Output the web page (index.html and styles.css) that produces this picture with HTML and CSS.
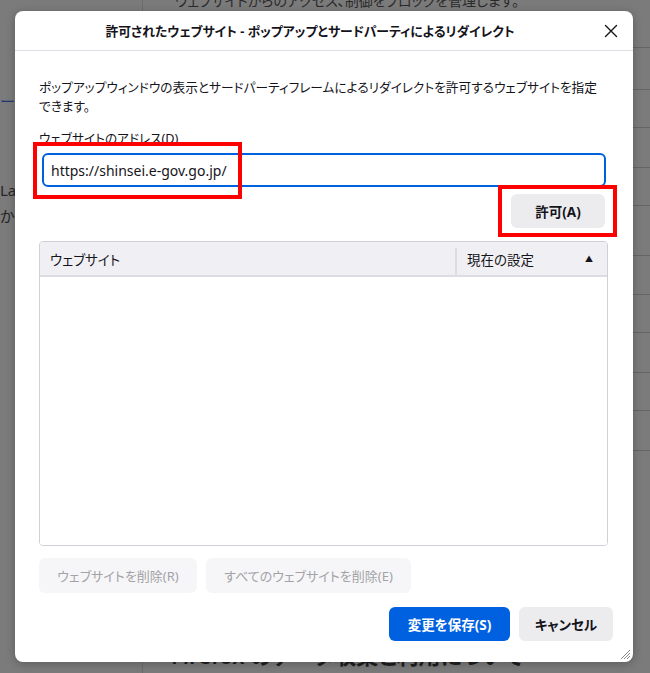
FILE: index.html
```html
<!DOCTYPE html>
<html lang="ja">
<head>
<meta charset="utf-8">
<title>許可されたウェブサイト</title>
<link rel="stylesheet" href="styles.css">
</head>
<body>
<div class="page">
  <aside class="sidebar">
    <div class="side-link">ー</div>
    <div class="side-text side-lab">Lab</div>
    <div class="side-text side-ka">か</div>
  </aside>
  <main class="main">
    <p class="top-text">ウェブサイトからのアクセス、制御をブロックを管理します。</p>
    <div class="rows">
      <div class="row r1"></div>
      <div class="row r2"></div>
      <div class="row r3"></div>
      <div class="row r4"></div>
      <div class="row r5"></div>
      <div class="row r6"></div>
      <div class="row r7"></div>
      <div class="row r8"></div>
      <div class="row r9"></div>
      <div class="row r10"></div>
      <div class="row r11"></div>
    </div>
    <h2 class="bottom-title">Firefox のデータ収集と利用について</h2>
  </main>
</div>

<div class="dialog">
  <header class="dlg-header">
    <h1 class="dlg-title">許可されたウェブサイト - ポップアップとサードパーティによるリダイレクト</h1>
    <button class="close" aria-label="閉じる">
      <svg width="14" height="14" viewBox="0 0 14 14"><path d="M1.5 1.5 L12.5 12.5 M12.5 1.5 L1.5 12.5" stroke="#15141a" stroke-width="1.4" fill="none" stroke-linecap="round"/></svg>
    </button>
  </header>
  <div class="dlg-body">
    <p class="desc">ポップアップウィンドウの表示とサードパーティフレームによるリダイレクトを許可するウェブサイトを指定<br>できます。</p>
    <label class="addr-label">ウェブサイトのアドレス(<u>D</u>)</label>
    <div class="addr-input">https://shinsei.e-gov.go.jp/</div>
    <div class="allow-row"><button class="btn btn-allow">許可(A)</button></div>
    <div class="table">
      <div class="thead">
        <div class="th th-site">ウェブサイト</div>
        <div class="th th-status"><span>現在の設定</span><span class="sort">▲</span></div>
      </div>
      <div class="tbody"></div>
    </div>
    <div class="remove-row">
      <button class="btn btn-disabled btn-remove">ウェブサイトを削除(R)</button>
      <button class="btn btn-disabled btn-remove-all">すべてのウェブサイトを削除(E)</button>
    </div>
    <div class="footer">
      <button class="btn btn-primary">変更を保存(S)</button>
      <button class="btn btn-cancel">キャンセル</button>
    </div>
  </div>
  <div class="mark mark-input"></div>
  <div class="mark mark-allow"></div>
  <svg class="grip" width="12" height="12" viewBox="0 0 12 12"><path d="M11 2 L2 11 M11 5 L5 11 M11 8 L8 11" stroke="#8a8a8a" stroke-width="1" fill="none"/></svg>
</div>
</body>
</html>
```

FILE: styles.css
```css
html, body {
  margin: 0;
  padding: 0;
}
body {
  width: 650px;
  height: 673px;
  overflow: hidden;
  background: #7b7b7b;
  font-family: "Noto Sans", "Noto Sans CJK JP", sans-serif;
  font-feature-settings: "palt";
  color: #15141a;
  position: relative;
}

/* dimmed background page */
.page {
  display: flex;
  height: 673px;
}
.sidebar {
  width: 143px;
  flex: none;
  border-right: 1px solid #6c6c6c;
  box-sizing: border-box;
  padding-top: 90px;
}
.side-link {
  color: #1f3577;
  font-size: 15px;
  line-height: 22px;
  height: 22px;
}
.side-text {
  color: #262626;
  font-size: 15px;
  line-height: 22px;
}
.side-lab { margin-top: 67px; }
.side-ka { margin-top: 4px; }
.main {
  flex: 1;
  display: flex;
  flex-direction: column;
}
.top-text {
  margin: -8px 0 0 32px;
  height: 0;
  font-size: 14px;
  line-height: 18px;
  color: #2a2a2a;
  white-space: nowrap;
}
.rows {
  display: flex;
  flex-direction: column;
}
.row { border-bottom: 1px solid #656565; box-sizing: border-box; }
.r1 { height: 56px; }
.r2 { height: 42px; }
.r3 { height: 38px; }
.r4 { height: 40px; }
.r5 { height: 38px; }
.r6 { height: 50px; }
.r7 { height: 39px; }
.r8 { height: 38px; }
.r9 { height: 40px; }
.r10 { height: 38px; }
.r11 { height: 40px; }
.bottom-title {
  margin: 189px 0 0 28px;
  font-size: 22px;
  font-weight: 600;
  line-height: 30px;
  color: #1f1f1f;
  white-space: nowrap;
}

/* dialog */
.dialog {
  position: absolute;
  left: 15px;
  top: 11px;
  width: 618px;
  height: 651px;
  background: #fff;
  border-radius: 8px;
  box-shadow: 0 2px 10px rgba(0, 0, 0, 0.25);
  display: flex;
  flex-direction: column;
}
.dlg-header {
  height: 40px;
  box-sizing: border-box;
  border-bottom: 1px solid #dcdce2;
  display: flex;
  align-items: center;
  padding-left: 8px;
  padding-right: 8px;
}
.dlg-title {
  flex: 1;
  margin: 0;
  text-align: center;
  font-size: 12.8px;
  font-weight: 700;
  line-height: 20px;
  white-space: nowrap;
  color: #15141a;
}
.close {
  width: 28px;
  height: 28px;
  border: 0;
  background: transparent;
  padding: 0;
  display: flex;
  align-items: center;
  justify-content: center;
}
.dlg-body {
  padding: 27px 25px 0 24px;
  display: flex;
  flex-direction: column;
}
.desc {
  margin: 0;
  font-size: 12.7px;
  line-height: 19px;
  white-space: nowrap;
  color: #15141a;
}
.addr-label {
  margin-top: 13px;
  font-size: 12.7px;
  line-height: 19px;
  color: #15141a;
}
.addr-label u {
  text-decoration-thickness: 1px;
  text-underline-offset: 2px;
}
.addr-input {
  margin: 5px 2px 0 3px;
  height: 34px;
  box-sizing: border-box;
  border: 2px solid #0061e0;
  border-radius: 6px;
  padding: 0 7px;
  display: flex;
  align-items: center;
  font-size: 14px;
  color: #15141a;
}
.allow-row {
  display: flex;
  justify-content: flex-end;
  margin-top: 7px;
  margin-right: 3px;
}
.btn {
  font-family: inherit;
  font-feature-settings: "palt";
  border: 0;
  border-radius: 6px;
  height: 34px;
  font-size: 13.5px;
  font-weight: 700;
  padding: 0;
  white-space: nowrap;
  box-sizing: border-box;
  cursor: default;
}
.btn-allow {
  width: 94px;
  background: #ececef;
  color: #15141a;
}
.table {
  margin-top: 13px;
  height: 305px;
  box-sizing: border-box;
  border: 1px solid #cfcfd8;
  border-radius: 4px;
  display: flex;
  flex-direction: column;
  overflow: hidden;
}
.thead {
  height: 35px;
  flex: none;
  box-sizing: border-box;
  background: #f0f0f4;
  border-bottom: 2px solid #dcdce2;
  display: flex;
}
.th {
  display: flex;
  align-items: center;
  font-size: 13.5px;
  color: #15141a;
}
.th-site {
  width: 415px;
  padding-left: 10px;
  box-sizing: border-box;
}
.th-status {
  flex: 1;
  border-left: 2px solid #dcdce2;
  margin: 6px 0 0;
  padding: 0 14px 6px 10px;
  justify-content: space-between;
}
.sort {
  font-size: 8px;
  color: #15141a;
}
.tbody { flex: 1; background: #fff; }
.remove-row {
  display: flex;
  gap: 9px;
  margin-top: 12px;
}
.btn-disabled {
  height: 35px;
  background: #f6f6f8;
  color: #a3a3a6;
  font-weight: 400;
  font-size: 13px;
}
.btn-remove { width: 158px; }
.btn-remove-all { width: 205px; }
.footer {
  display: flex;
  justify-content: flex-end;
  gap: 9px;
  margin-top: 14px;
  margin-right: -5px;
}
.btn-primary {
  width: 121px;
  background: #0061e0;
  color: #fff;
}
.btn-cancel {
  width: 94px;
  background: #ececef;
  color: #15141a;
}

/* red annotation boxes */
.mark {
  position: absolute;
  border: 4px solid #ff0000;
  box-sizing: border-box;
}
.mark-input {
  left: 18px;
  top: 131px;
  width: 209px;
  height: 57px;
}
.mark-allow {
  left: 483px;
  top: 174px;
  width: 119px;
  height: 52px;
}
.grip {
  position: absolute;
  right: 2px;
  bottom: 2px;
}
```
